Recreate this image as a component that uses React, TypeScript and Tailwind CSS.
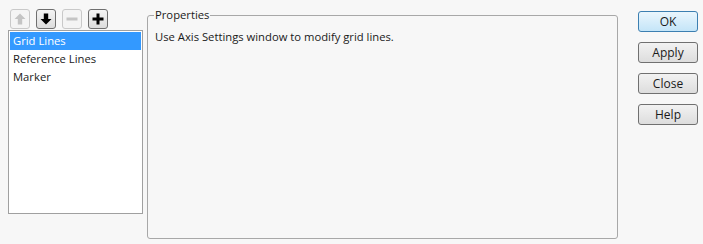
import React from "react";

const font = { fontFamily: '"Segoe UI", "Open Sans", "Liberation Sans", sans-serif' };

function IconButton({ disabled, children }: { disabled?: boolean; children: React.ReactNode }) {
  return (
    <button
      className={
        disabled
          ? "w-[20px] h-[20px] flex items-center justify-center rounded-[3px] border border-[#c9c9c9] bg-[#f4f4f4]"
          : "w-[20px] h-[20px] flex items-center justify-center rounded-[3px] border border-[#6f6f6f] bg-gradient-to-b from-[#f4f4f4] to-[#dcdcdc]"
      }
    >
      {children}
    </button>
  );
}

function DialogButton({ label, primary }: { label: string; primary?: boolean }) {
  return (
    <button
      className={
        primary
          ? "w-[60px] h-[21px] rounded-[3px] border border-[#3c7fb1] bg-gradient-to-b from-[#eaf6fd] to-[#c4e5f8] text-[12px] text-[#1a1a1a]"
          : "w-[60px] h-[21px] rounded-[3px] border border-[#707070] bg-gradient-to-b from-[#f2f2f2] to-[#dddddd] text-[12px] text-[#1a1a1a]"
      }
    >
      {label}
    </button>
  );
}

export default function App() {
  const items = ["Grid Lines", "Reference Lines", "Marker"];
  return (
    <div className="w-[703px] h-[244px] bg-[#f7f7f7] flex pl-[8px] pt-[9px]" style={font}>
      {/* list column */}
      <div className="w-[135px] flex flex-col">
        <div className="flex gap-[6px] pl-[2px]">
          <IconButton disabled>
            <svg width="12" height="12" viewBox="0 0 12 12">
              <path d="M6 0.5 L11.5 6 L8.2 6 L8.2 11.5 L3.8 11.5 L3.8 6 L0.5 6 Z" fill="#c4c4c4" />
            </svg>
          </IconButton>
          <IconButton>
            <svg width="12" height="12" viewBox="0 0 12 12">
              <path d="M6 11.5 L11.5 6 L8.2 6 L8.2 0.5 L3.8 0.5 L3.8 6 L0.5 6 Z" fill="#000" />
            </svg>
          </IconButton>
          <IconButton disabled>
            <svg width="12" height="12" viewBox="0 0 12 12">
              <rect x="0.5" y="4.5" width="11" height="3" fill="#c4c4c4" />
            </svg>
          </IconButton>
          <IconButton>
            <svg width="12" height="12" viewBox="0 0 12 12">
              <rect x="0.5" y="4.5" width="11" height="3" fill="#000" />
              <rect x="4.5" y="0.5" width="3" height="11" fill="#000" />
            </svg>
          </IconButton>
        </div>
        <div className="mt-[1px] h-[184px] border border-[#a0a0a0] bg-white p-[1px]">
          {items.map((it, i) => (
            <div
              key={it}
              className={
                i === 0
                  ? "h-[18px] leading-[18px] pl-[3px] text-[11.25px] bg-[#3399ff] text-white"
                  : "h-[18px] leading-[18px] pl-[3px] text-[11.25px] text-[#1a1a1a]"
              }
            >
              {it}
            </div>
          ))}
        </div>
      </div>

      {/* properties group */}
      <fieldset className="ml-[4px] mt-[-2px] w-[471px] h-[232px] border border-[#a8a8a8] rounded-[3px] pl-[6px]">
        <legend className="px-[1px] text-[11.25px] leading-[16px] text-[#1a1a1a]">Properties</legend>
        <div className="text-[11.25px] text-[#1a1a1a] pt-[6px] pl-[1px]">
          Use Axis Settings window to modify grid lines.
        </div>
      </fieldset>

      {/* buttons */}
      <div className="ml-[20px] mt-[2px] flex flex-col gap-[10px]">
        <DialogButton label="OK" primary />
        <DialogButton label="Apply" />
        <DialogButton label="Close" />
        <DialogButton label="Help" />
      </div>
    </div>
  );
}
